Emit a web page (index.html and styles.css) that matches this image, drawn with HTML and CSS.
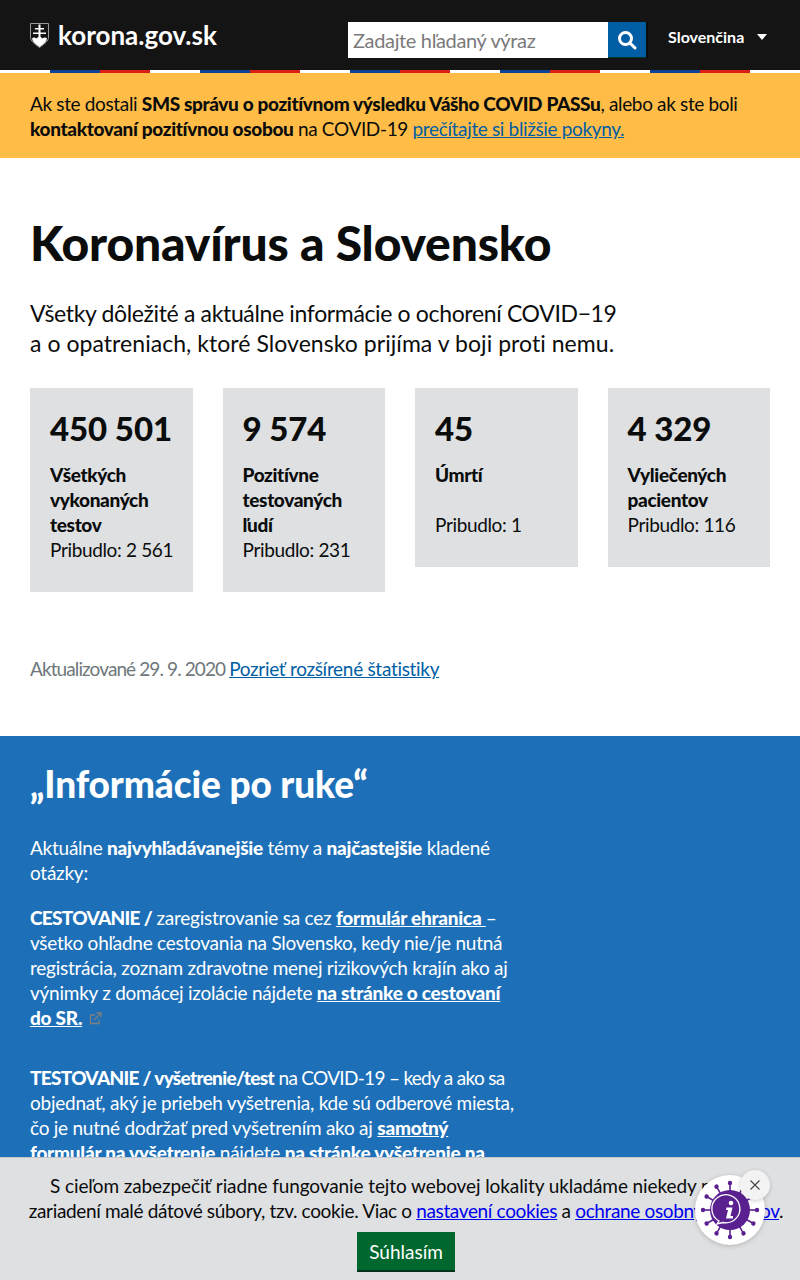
FILE: index.html
```html
<!DOCTYPE html>
<html lang="sk">
<head>
    <meta charset="UTF-8">
    <meta name="viewport" content="width=device-width, initial-scale=1.0">
    <title>Koronavírus a Slovensko</title>
    <link rel="stylesheet" href="styles.css">
</head>
<body>
    <header class="site-header">
        <a class="logo" href="#">
            <svg class="logo-mark" width="19" height="25" viewBox="0 0 19 25">
                <path d="M0.500 0.500H18.500V14C18.500 18 15 20.500 9.500 24.500C4 20.500 0.500 18 0.500 14Z" fill="none" stroke="#9a9a9a"/>
                <path d="M2 15.500C3.500 14 5 14.500 6.500 15.500C7.500 14.500 8 14 9.500 14C11 14 11.500 14.500 12.500 15.500C14 14.500 15.500 14 17 15.500C16.500 19 14 20.500 9.500 24C5 20.500 2.500 19 2 15.500Z" fill="#fff"/>
                <path d="M8.500 1.500H10.500V5H14V6.500H10.500V9.500H16V11H10.500V15H8.500V11H3V9.500H8.500V6.500H5V5H8.500Z" fill="#fff"/>
            </svg>
            <span>korona.gov.sk</span>
        </a>
        <form class="search">
            <input class="search-input" type="text" placeholder="Zadajte hľadaný výraz">
            <button class="search-btn" type="button" aria-label="Hľadať">
                <svg width="20" height="20" viewBox="0 0 20 20" fill="none" stroke="#fff" stroke-width="3">
                    <circle cx="8.500" cy="8.500" r="6"/>
                    <path d="M13 13L18 18" stroke-linecap="round"/>
                </svg>
            </button>
        </form>
        <div class="lang">
            <span>Slovenčina</span>
            <i class="lang-arrow"></i>
        </div>
    </header>
    <div class="flag-stripe"></div>

    <div class="notice">
        Ak ste dostali <strong>SMS správu o pozitívnom výsledku Vášho COVID PASSu</strong>, alebo ak ste boli<br>
        <strong>kontaktovaní pozitívnou osobou</strong> na COVID-19 <a href="#">prečítajte si bližšie pokyny.</a>
    </div>

    <section class="intro">
        <h1>Koronavírus a Slovensko</h1>
        <p class="lead"><span class="lead-first">Všetky dôležité a aktuálne informácie o ochorení COVID−19</span><br>a o opatreniach, ktoré Slovensko prijíma v boji proti nemu.</p>

        <div class="stats">
            <div class="stat">
                <div class="stat-num">450 501</div>
                <strong>Všetkých<br>vykonaných<br>testov</strong><br>
                Pribudlo: 2 561
            </div>
            <div class="stat">
                <div class="stat-num">9 574</div>
                <strong>Pozitívne<br>testovaných<br>ľudí</strong><br>
                Pribudlo: 231
            </div>
            <div class="stat">
                <div class="stat-num">45</div>
                <strong>Úmrtí</strong><br><br>
                Pribudlo: 1
            </div>
            <div class="stat">
                <div class="stat-num">4 329</div>
                <strong>Vyliečených<br>pacientov</strong><br>
                Pribudlo: 116
            </div>
        </div>

        <p class="updated">Aktualizované 29. 9. 2020 <a href="#">Pozrieť rozšírené štatistiky</a></p>
    </section>

    <section class="faq">
        <h2>„Informácie po ruke“</h2>
        <p>Aktuálne <strong>najvyhľadávanejšie</strong> témy a <strong>najčastejšie</strong> kladené<br>otázky:</p>
        <p><strong class="caps">CESTOVANIE /</strong> zaregistrovanie sa cez <a href="#">formulár ehranica </a>–<br>
            všetko ohľadne cestovania na Slovensko, kedy nie/je nutná<br>
            registrácia, zoznam zdravotne menej rizikových krajín ako aj<br>
            výnimky z domácej izolácie nájdete <a href="#">na stránke o cestovaní<br>do SR.</a>
            <svg class="ext-icon" width="13" height="13" viewBox="0 0 13 13" fill="none" stroke="#7f7f7f" stroke-width="1.300">
                <path d="M10 7.500V11.500H1.500V3H6"/>
                <path d="M5 8L11.500 1.500M7.500 1H12V5.500"/>
            </svg>
        </p>
        <p class="faq-block"><strong class="caps">TESTOVANIE / vyšetrenie/test</strong> <span class="tight">na COVID-19 – kedy a ako sa</span><br>
            objednať, aký je priebeh vyšetrenia, kde sú odberové miesta,<br>
            čo je nutné dodržať pred vyšetrením ako aj <a href="#">samotný<br>formulár na vyšetrenie</a> nájdete <a href="#">na stránke vyšetrenie na</a></p>
    </section>

    <div class="cookies">
        <p><span class="cookie-first">S cieľom zabezpečiť riadne fungovanie tejto webovej lokality ukladáme niekedy na vaše</span><br>
        zariadení malé dátové súbory, tzv. cookie. Viac o <a href="#">nastavení cookies</a> a <a href="#">ochrane osobných údajov</a>.</p>
        <button class="cookie-btn" type="button">Súhlasím</button>
    </div>

    <div class="virus-badge">
        <svg width="60" height="60" viewBox="-30 -30 60 60">
            <defs>
                <g id="spike">
                    <path d="M0 -18V-27" stroke="#5a2090" stroke-width="1.600"/>
                    <circle cy="-27" r="2.200" fill="#5a2090"/>
                </g>
            </defs>
            <use href="#spike"/>
            <use href="#spike" transform="rotate(30)"/>
            <use href="#spike" transform="rotate(60)"/>
            <use href="#spike" transform="rotate(90)"/>
            <use href="#spike" transform="rotate(120)"/>
            <use href="#spike" transform="rotate(150)"/>
            <use href="#spike" transform="rotate(180)"/>
            <use href="#spike" transform="rotate(210)"/>
            <use href="#spike" transform="rotate(240)"/>
            <use href="#spike" transform="rotate(270)"/>
            <use href="#spike" transform="rotate(300)"/>
            <use href="#spike" transform="rotate(330)"/>
            <circle r="20" fill="#5a2090"/>
            <path d="M-11 11A14 14 0 1 1 -7 12.500L-13 14Z" fill="none" stroke="#fff" stroke-width="1.300"/>
            <circle cx="1" cy="-7" r="2.300" fill="#fff"/>
            <path d="M-3.500 -2.500H2.500L0.500 6H3V8.500H-4L-2 0H-4Z" fill="#fff"/>
        </svg>
        <span class="virus-close">
            <svg width="10" height="10" viewBox="0 0 10 10" stroke="#444" stroke-width="1.100">
                <path d="M0.500 0.500L9.500 9.500M9.500 0.500L0.500 9.500"/>
            </svg>
        </span>
    </div>
</body>
</html>
```

FILE: styles.css
```css
html, body {
    height: 100%;
    overflow: hidden;
}
body {
    margin: 0;
    font-family: Lato, "Noto Sans", sans-serif;
    font-size: 19px;
    letter-spacing: -0.35px;
    line-height: 25px;
    color: #0b0c0c;
    background: white;
}
strong { font-weight: 900; }
a { color: #005ea5; }

.site-header {
    height: 70px;
    background: #141414;
    display: flex;
    align-items: flex-start;
    padding: 0 30px;
    box-sizing: border-box;
}
.logo {
    display: flex;
    align-items: center;
    gap: 9px;
    margin-top: 22px;
    color: white;
    font-size: 26px;
    font-weight: 700;
    line-height: 26px;
    letter-spacing: 0;
    text-decoration: none;
    width: 318px;
}
.search {
    display: flex;
    margin-top: 22px;
    width: 298px;
    height: 36px;
}
.search-input {
    width: 260px;
    height: 36px;
    border: 0;
    padding: 0 5px;
    box-sizing: border-box;
    font: 20px Lato, sans-serif;
    letter-spacing: -0.35px;
}
.search-input::placeholder { color: #7a7a7a; }
.search-btn {
    width: 38px;
    height: 36px;
    border: 0;
    padding: 0;
    background: #005ea5;
    box-shadow: inset 0 -1px 0 #00332a, 2px 0 0 #0b0c0c;
    display: flex;
    align-items: center;
    justify-content: center;
}
.lang {
    margin: 24px 0 0 22px;
    display: flex;
    align-items: center;
    color: white;
    font-size: 16px;
    font-weight: 700;
    line-height: 25px;
    letter-spacing: 0;
}
.lang-arrow {
    margin-left: 13px;
    border-left: 5.500px solid transparent;
    border-right: 5.500px solid transparent;
    border-top: 6px solid white;
}
.flag-stripe {
    height: 3px;
    background: repeating-linear-gradient(90deg, white 0 50px, #0b4196 50px 100px, #db1f12 100px 150px);
}

.notice {
    height: 85px;
    box-sizing: border-box;
    padding: 18px 30px 0;
    background: #ffbd47;
}

.intro { padding: 0 30px; }
h1 {
    margin: 56px 0 0;
    font-size: 48px;
    line-height: 58px;
    font-weight: 900;
    letter-spacing: -0.15px;
}
.lead {
    margin: 26px 0 0;
    font-size: 23px;
    line-height: 30px;
    letter-spacing: 0.05px;
}
.lead-first { letter-spacing: -0.35px; }
.stats {
    display: grid;
    grid-template-columns: repeat(4, minmax(0, 1fr));
    gap: 30px;
    align-items: start;
    margin-top: 30px;
}
.stat {
    background: #dee0e2;
    padding: 20px 20px 30px;
    white-space: nowrap;
}
.stat-num {
    font-size: 33px;
    line-height: 40px;
    font-weight: 900;
    letter-spacing: -0.1px;
    margin-bottom: 14px;
}
.updated {
    margin: 64px 0 0;
    color: #6f777b;
    letter-spacing: -0.9px;
}
.updated a { letter-spacing: -0.3px; }

.faq {
    margin-top: 55px;
    height: 600px;
    box-sizing: border-box;
    padding: 23px 30px 0;
    background: #1d70b8;
    color: white;
    letter-spacing: -0.25px;
}
.faq h2 {
    margin: 0;
    font-size: 37px;
    line-height: 50px;
    font-weight: 900;
    letter-spacing: -0.1px;
}
.faq p { margin: 26px 0 0; }
.faq p + p { margin-top: 20px; }
.faq a {
    color: white;
    font-weight: 900;
}
.faq .faq-block { margin-top: 35px; }
.faq .caps { letter-spacing: -0.7px; }
.faq .tight { letter-spacing: -0.7px; }
.ext-icon { margin-left: 2px; }

.cookies {
    position: fixed;
    left: 0;
    right: 0;
    bottom: 0;
    height: 123px;
    box-sizing: border-box;
    padding: 15px 0 0 12px;
    background: #dee0e2;
    border-top: 1px solid #c4c6c8;
    text-align: center;
}
.cookies p { margin: 0; }
.cookies a { color: #0000ee; }
.cookie-first { letter-spacing: -0.1px; }
.cookie-btn {
    margin-top: 9px;
    width: 98px;
    height: 40px;
    border: 0;
    border-bottom: 2px solid #00331a;
    background: #00672f;
    color: white;
    font: 19px Lato, sans-serif;
}

.virus-badge {
    position: fixed;
    left: 695px;
    top: 1175px;
    width: 70px;
    height: 70px;
    border-radius: 50%;
    background: white;
    box-shadow: 0 1px 5px rgba(0,0,0,0.2);
    display: flex;
    align-items: center;
    justify-content: center;
}
.virus-close {
    position: absolute;
    left: 45px;
    top: -5px;
    width: 30px;
    height: 30px;
    border-radius: 50%;
    background: #f3f3f3;
    box-shadow: 0 1px 4px rgba(0,0,0,0.2);
    display: flex;
    align-items: center;
    justify-content: center;
}
```
